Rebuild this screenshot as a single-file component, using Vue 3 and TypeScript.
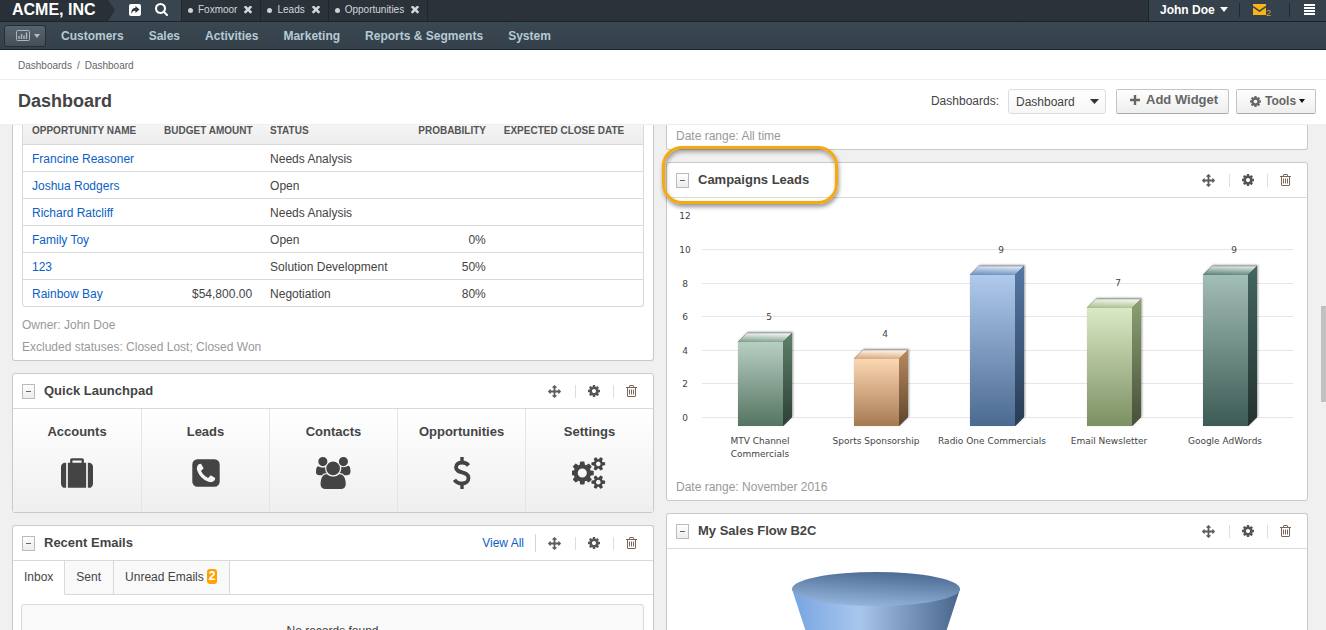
<script setup lang="ts">
import { ref } from 'vue'

interface Icon { box: string; d: string }

const icons: Record<string, Icon> = {
  cog: {
    box: '128 128 1536 1536',
    d: 'M1152 896q0-106-75-181t-181-75-181 75-75 181 75 181 181 75 181-75 75-181zm512-109v222q0 12-8 23t-20 13l-185 28q-19 54-39 91 35 50 107 138 10 12 10 25t-9 23q-27 37-99 108t-94 71q-12 0-26-9l-138-108q-44 23-91 38-16 136-29 186-7 28-36 28h-222q-14 0-24.500-8.500t-11.500-21.500l-28-184q-49-16-90-37l-141 107q-10 9-25 9-14 0-25-11-126-114-165-168-7-10-7-23 0-12 8-23 15-21 51-66.500t54-70.500q-27-50-41-99l-183-27q-13-2-21-12.500t-8-23.500v-222q0-12 8-23t19-13l186-28q14-46 39-92-40-57-107-138-10-12-10-24 0-10 9-23 26-36 98.500-107.500t94.500-71.500q13 0 26 10l138 107q44-23 91-38 16-136 29-186 7-28 36-28h222q14 0 24.500 8.500t11.500 21.500l28 184q49 16 90 37l142-107q9-9 24-9 13 0 25 10 129 119 165 170 7 8 7 22 0 12-8 23-15 21-51 66.500t-54 70.500q26 50 41 98l183 28q13 2 21 12.500t8 23.500z',
  },
  move: {
    box: '0 0 1792 1792',
    d: 'M1792 896q0 26-19 45l-256 256q-19 19-45 19t-45-19-19-45v-128h-384v384h128q26 0 45 19t19 45-19 45l-256 256q-19 19-45 19t-45-19l-256-256q-19-19-19-45t19-45 45-19h128v-384h-384v128q0 26-19 45t-45 19-45-19l-256-256q-19-19-19-45t19-45l256-256q19-19 45-19t45 19 19 45v128h384v-384h-128q-26 0-45-19t-19-45 19-45l256-256q19-19 45-19t45 19l256 256q19 19 19 45t-19 45-45 19h-128v384h384v-128q0-26 19-45t45-19 45 19l256 256q19 19 19 45z',
  },
  trash: {
    box: '192 128 1408 1536',
    d: 'M704 736v576q0 14-9 23t-23 9h-64q-14 0-23-9t-9-23v-576q0-14 9-23t23-9h64q14 0 23 9t9 23zm256 0v576q0 14-9 23t-23 9h-64q-14 0-23-9t-9-23v-576q0-14 9-23t23-9h64q14 0 23 9t9 23zm256 0v576q0 14-9 23t-23 9h-64q-14 0-23-9t-9-23v-576q0-14 9-23t23-9h64q14 0 23 9t9 23zm128 724v-948h-896v948q0 22 7 40.500t14.500 27 10.500 8.500h832q3 0 10.500-8.500t14.500-27 7-40.500zm-672-1076h448l-48-117q-7-9-17-11h-317q-10 2-17 11zm928 32v64q0 14-9 23t-23 9h-96v948q0 83-47 143.500t-113 60.500h-832q-66 0-113-58.500t-47-141.500v-952h-96q-14 0-23-9t-9-23v-64q0-14 9-23t23-9h309l70-167q15-37 54-63t79-26h320q40 0 79 26t54 63l70 167h309q14 0 23 9t9 23z',
  },
  search: {
    box: '64 128 1664 1664',
    d: 'M1216 832q0-185-131.500-316.500t-316.500-131.500-316.500 131.500-131.500 316.500 131.500 316.500 316.500 131.500 316.500-131.500 131.500-316.500zm512 832q0 52-38 90t-90 38q-54 0-90-38l-343-342q-179 124-399 124-143 0-273.500-55.500t-225-150-150-225-55.500-273.500 55.500-273.500 150-225 225-150 273.500-55.500 273.500 55.500 225 150 150 225 55.500 273.500q0 220-124 399l343 343q37 37 37 90z',
  },
  times: {
    box: '302 434 1188 1188',
    d: 'M1490 1322q0 40-28 68l-136 136q-28 28-68 28t-68-28l-294-294-294 294q-28 28-68 28t-68-28l-136-136q-28-28-28-68t28-68l294-294-294-294q-28-28-28-68t28-68l136-136q28-28 68-28t68 28l294 294 294-294q28-28 68-28t68 28l136 136q28 28 28 68t-28 68l-294 294 294 294q28 28 28 68z',
  },
  suitcase: {
    box: '0 -64 1792 1792',
    d: 'M640 256h512v-128h-512v128zm-352 0v1408h-64q-92 0-158-66t-66-158v-960q0-92 66-158t158-66h64zm1120 0v1408h-1024v-1408h128v-160q0-40 28-68t68-28h576q40 0 68 28t28 68v160h128zm384 224v960q0 92-66 158t-158 66h-64v-1408h64q92 0 158 66t66 158z',
  },
  phone: {
    box: '0 0 1792 1792',
    d: 'M1408 1193q0-11-2-16t-18-16.500-40.500-25-47.500-26.500-45.500-25-28.500-15q-5-3-19-13t-25-15-21-5q-15 0-36.500 20.500t-39.500 45-38.500 45-33.500 20.500q-7 0-16.500-3.500t-15.500-6.500-17-9.500-14-8.500q-99-55-170-126.500t-127-170.500q-2-3-8.500-14t-9.500-17-6.500-15.500-3.500-16.500q0-13 20.500-33.500t45-38.500 45-39.500 20.500-36.500q0-10-5-21t-15-25-13-19q-3-6-15-28.500t-25-45.500-26.500-47.500-25-40.500-16.500-18-16-2q-48 0-101 22-46 21-80 94.500t-34 130.500q0 16 2.500 34t5 30.500 9 33 10 29.500 12.500 33 11 30q60 164 216.500 320.500t320.500 216.500q6 2 30 11t33 12.500 29.500 10 33 9 30.500 5 34 2.500q57 0 130.500-34t94.500-80q22-53 22-101zm256-777v960q0 119-84.500 203.500t-203.500 84.500h-960q-119 0-203.500-84.500t-84.500-203.500v-960q0-119 84.500-203.500t203.500-84.500h960q119 0 203.500 84.500t84.500 203.500z',
  },
  users: {
    box: '0 0 1920 1792',
    d: 'M593 896q-162 5-265 128h-134q-82 0-138-40.500t-56-118.500q0-353 124-353 6 0 43.500 21t97.500 42.500 119 21.500q67 0 133-23-5 37-5 66 0 159 93 283zm1071 637q0 120-73 189.500t-194 69.500h-874q-121 0-194-69.500t-73-189.500q0-53 3.500-103.500t14-109 26.500-108.500 43-97.500 62-81 85.500-53.500 111.500-20q10 0 43 21.500t73 48 107 48 135 21.500 135-21.500 107-48 73-48 43-21.500q61 0 111.500 20t85.500 53.500 62 81 43 97.500 26.500 108.500 14 109 3.500 103.500zm-1024-1277q0 106-75 181t-181 75-181-75-75-181 75-181 181-75 181 75 75 181zm704 384q0 159-112.500 271.500t-271.500 112.500-271.500-112.500-112.500-271.500 112.500-271.500 271.500-112.500 271.500 112.500 112.500 271.500zm576 225q0 78-56 118.500t-138 40.500h-134q-103-123-265-128 93-124 93-283 0-29-5-66 66 23 133 23 59 0 119-21.500t97.500-42.500 43.500-21q124 0 124 353zm-128-609q0 106-75 181t-181 75-181-75-75-181 75-181 181-75 181 75 75 181z',
  },
  cogs: {
    box: '0 0 1920 1792',
    d: 'M832 896q0-106-75-181t-181-75-181 75-75 181 75 181 181 75 181-75 75-181zm768 512q0-52-38-90t-90-38-90 38-38 90q0 53 37.500 90.500t90.500 37.500 90.500-37.500 37.500-90.500zm0-1024q0-52-38-90t-90-38-90 38-38 90q0 53 37.500 90.500t90.500 37.500 90.500-37.500 37.500-90.500zm-384 421v185q0 10-7 19.500t-16 10.500l-155 24q-11 35-32 76 34 48 90 115 7 11 7 20 0 12-7 19-23 30-82.500 89.500t-78.500 59.500q-11 0-21-7l-115-90q-37 19-77 31-11 108-23 155-7 24-30 24h-186q-11 0-20-7.500t-10-17.500l-23-153q-34-10-75-31l-118 89q-7 7-20 7-11 0-21-8-144-133-144-160 0-9 7-19 10-14 41-53t47-61q-23-44-35-82l-152-24q-10-1-17-9.500t-7-19.500v-185q0-10 7-19.500t16-10.500l155-24q11-35 32-76-34-48-90-115-7-11-7-20 0-12 7-20 22-30 82-89t79-59q11 0 21 7l115 90q34-18 77-32 11-108 23-154 7-24 30-24h186q11 0 20 7.500t10 17.500l23 153q34 10 75 31l118-89q8-7 20-7 11 0 21 8 144 133 144 160 0 8-7 19-12 16-42 54t-45 60q23 48 34 82l152 23q10 2 17 10.500t7 19.500zm640 533v140q0 16-149 31-12 27-30 52 51 113 51 138 0 4-4 7-122 71-124 71-8 0-46-47t-52-68q-20 2-30 2t-30-2q-14 21-52 68t-46 47q-2 0-124-71-4-3-4-7 0-25 51-138-18-25-30-52-149-15-149-31v-140q0-16 149-31 13-29 30-52-51-113-51-138 0-4 4-7 4-2 35-20t59-34 30-16q8 0 46 46.500t52 67.500q20-2 30-2t30 2q51-71 92-112l6-2q4 0 124 70 4 3 4 7 0 25-51 138 17 23 30 52 149 15 149 31zm0-1024v140q0 16-149 31-12 27-30 52 51 113 51 138 0 4-4 7-122 71-124 71-8 0-46-47t-52-68q-20 2-30 2t-30-2q-14 21-52 68t-46 47q-2 0-124-71-4-3-4-7 0-25 51-138-18-25-30-52-149-15-149-31v-140q0-16 149-31 13-29 30-52-51-113-51-138 0-4 4-7 4-2 35-20t59-34 30-16q8 0 46 46.500t52 67.500q20-2 30-2t30 2q51-71 92-112l6-2q4 0 124 70 4 3 4 7 0 25-51 138 17 23 30 52 149 15 149 31z',
  },
}

const pinned = ['Foxmoor', 'Leads', 'Opportunities']
const menu = ['Customers', 'Sales', 'Activities', 'Marketing', 'Reports & Segments', 'System']
const tools = [
  { icon: 'move', label: 'Move' },
  { icon: 'cog', label: 'Configure' },
  { icon: 'trash', label: 'Delete' },
]
const dashboard = ref('Dashboard')
const mailTab = ref('Inbox')

const opportunities = [
  { name: 'Francine Reasoner', budget: '', status: 'Needs Analysis', probability: '' },
  { name: 'Joshua Rodgers', budget: '', status: 'Open', probability: '' },
  { name: 'Richard Ratcliff', budget: '', status: 'Needs Analysis', probability: '' },
  { name: 'Family Toy', budget: '', status: 'Open', probability: '0%' },
  { name: '123', budget: '', status: 'Solution Development', probability: '50%' },
  { name: 'Rainbow Bay', budget: '$54,800.00', status: 'Negotiation', probability: '80%' },
]

const launchpad = [
  { label: 'Accounts', icon: 'suitcase' },
  { label: 'Leads', icon: 'phone' },
  { label: 'Contacts', icon: 'users' },
  { label: 'Opportunities', icon: '' },
  { label: 'Settings', icon: 'cogs' },
]

const mailTabs = [
  { label: 'Inbox', count: 0 },
  { label: 'Sent', count: 0 },
  { label: 'Unread Emails', count: 2 },
]

/* Chart geometry, in viewBox units */
const zeroY = 220
const top = (v: number) => Math.round(zeroY - v * 16.8)
const ticks = [0, 2, 4, 6, 8, 10, 12]
const campaigns = [
  { x: 71, value: 5, lines: ['MTV Channel', 'Commercials'], front: ['#b7cfc1', '#557462'], side: ['#5d8069', '#2e4036'], cap: ['#7f9f8c', '#f0f5f2'] },
  { x: 187, value: 4, lines: ['Sports Sponsorship'], front: ['#fbd7b3', '#a67a51'], side: ['#b98a5d', '#5e452e'], cap: ['#d8a878', '#fdf3e9'] },
  { x: 303, value: 9, lines: ['Radio One Commercials'], front: ['#afcaec', '#4b6a91'], side: ['#5578a5', '#293b52'], cap: ['#6a8fc0', '#dde8f5'] },
  { x: 420, value: 7, lines: ['Email Newsletter'], front: ['#dae9c4', '#7c9063'], side: ['#8ca172', '#465038'], cap: ['#a9bf8c', '#f2f7ea'] },
  { x: 536, value: 9, lines: ['Google AdWords'], front: ['#a3bdb7', '#3c5b54'], side: ['#43665e', '#22322f'], cap: ['#5c817a', '#dce7e4'] },
]
</script>

<template>
  <div class="page">
    <header class="topbar">
      <a class="brand" href="#">ACME, INC</a>
      <svg class="chevron" viewBox="0 0 10 21" aria-hidden="true"><path d="M0 0H2L9 10L2 21H0Z" /></svg>
      <div class="quick">
        <button type="button" aria-label="Share">
          <svg width="12" height="12" viewBox="0 0 12 12"><rect width="12" height="12" rx="2" fill="#fff" /><path d="M2.500 10C1.800 6 4 4.100 6.400 4.100V1.900L10.500 5.500L6.400 9V6.700C4.600 6.500 3.200 7.500 2.500 10Z" fill="#2c363f" /></svg>
        </button>
        <button type="button" aria-label="Search">
          <svg width="13" height="13" :viewBox="icons.search.box"><path :d="icons.search.d" fill="#fff" /></svg>
        </button>
      </div>
      <ul class="pins">
        <li v-for="p in pinned" :key="p">
          <i class="dot"></i><a href="#">{{ p }}</a>
          <button type="button" :aria-label="'Close ' + p"><svg width="8" height="8" :viewBox="icons.times.box"><path :d="icons.times.d" /></svg></button>
        </li>
      </ul>
      <div class="account">
        <button type="button" class="user">John Doe <svg width="8" height="5" viewBox="0 0 8 5"><path d="M0 0H8L4 5Z" fill="#fff" /></svg></button>
        <a class="mail" href="#" aria-label="Unread mail">
          <svg width="13" height="11" viewBox="0 0 13 11"><path d="M0 0H13V11H0Z" fill="#fbb316" /><path d="M0 2.500L6.500 7L13 2.500" fill="none" stroke="#35414b" stroke-width="1.500" /></svg><span>2</span>
        </a>
        <button type="button" class="burger" aria-label="Menu"><svg width="11" height="11" viewBox="0 0 11 11"><path d="M0 1H11M0 4H11M0 7H11M0 10H11" stroke="#fff" stroke-width="2" /></svg></button>
      </div>
    </header>

    <nav class="nav">
      <button type="button" class="dash" aria-label="Dashboards">
        <svg width="14" height="11" viewBox="0 0 14 11"><rect x="0.500" y="0.500" width="13" height="10" rx="1" fill="none" stroke="#a9b6be" /><path d="M3 9V6M5.500 9V4M8 9V5.500M10.500 9V2.500" stroke="#a9b6be" stroke-width="1.500" /></svg>
        <svg width="6" height="4" viewBox="0 0 6 4"><path d="M0 0H6L3 4Z" fill="#b4bec5" /></svg>
      </button>
      <a v-for="m in menu" :key="m" href="#">{{ m }}</a>
    </nav>

    <div class="crumbs"><a href="#">Dashboards</a><span>/</span><span>Dashboard</span></div>

    <div class="titlebar">
      <h1>Dashboard</h1>
      <label for="dashboards">Dashboards:</label>
      <div class="picker">
        <select id="dashboards" v-model="dashboard"><option>Dashboard</option></select>
        <svg width="9" height="5" viewBox="0 0 9 5"><path d="M0 0H9L4.500 5Z" fill="#333" /></svg>
      </div>
      <button type="button" class="btn add">
        <svg width="10" height="10" viewBox="0 0 10 10"><path d="M5 0V10M0 5H10" stroke="#666" stroke-width="2.400" /></svg>Add Widget
      </button>
      <button type="button" class="btn more">
        <svg class="gear" width="11" height="11" :viewBox="icons.cog.box"><path :d="icons.cog.d" fill="#666" /></svg>Tools
        <svg width="6" height="4" viewBox="0 0 6 4"><path d="M0 0H6L3 4Z" fill="#111" /></svg>
      </button>
    </div>

    <main class="board">
      <div class="column">
        <section class="widget cut">
          <div class="table-box">
            <table>
              <colgroup><col class="c-name" /><col class="c-budget" /><col class="c-status" /><col class="c-prob" /><col /></colgroup>
              <thead>
                <tr><th>OPPORTUNITY NAME</th><th class="num">BUDGET AMOUNT</th><th>STATUS</th><th class="num">PROBABILITY</th><th>EXPECTED CLOSE DATE</th></tr>
              </thead>
              <tbody>
                <tr v-for="o in opportunities" :key="o.name">
                  <td><a href="#">{{ o.name }}</a></td><td class="num">{{ o.budget }}</td><td>{{ o.status }}</td><td class="num">{{ o.probability }}</td><td></td>
                </tr>
              </tbody>
            </table>
          </div>
          <div class="notes"><p>Owner: John Doe</p><p>Excluded statuses: Closed Lost; Closed Won</p></div>
        </section>

        <section class="widget">
          <header class="head">
            <button type="button" class="fold" aria-label="Collapse"></button>
            <h2>Quick Launchpad</h2>
            <div class="tools">
              <button v-for="t in tools" :key="t.icon" type="button" :class="t.icon" :aria-label="t.label"><svg :viewBox="icons[t.icon].box"><path :d="icons[t.icon].d" /></svg></button>
            </div>
          </header>
          <div class="launch">
            <a v-for="l in launchpad" :key="l.label" href="#">
              <span>{{ l.label }}</span>
              <svg v-if="l.icon" height="32" :class="l.icon" :viewBox="icons[l.icon].box"><path :d="icons[l.icon].d" fill="#444" /></svg>
              <svg v-else height="32" width="18" viewBox="0 0 18 32" fill="none" stroke="#444"><path d="M15.500 8.500C14 6.500 11.500 5.500 9 5.500C5.500 5.500 3 7.300 3 10.300C3 17.500 15.500 13.300 15.500 21C15.500 24.400 12.700 26.500 9 26.500C6 26.500 3.200 25.200 1.500 22.800" stroke-width="3.800" /><path d="M9 0V5M9 27V32" stroke-width="3.400" /></svg>
            </a>
          </div>
        </section>

        <section class="widget last">
          <header class="head">
            <button type="button" class="fold" aria-label="Collapse"></button>
            <h2>Recent Emails</h2>
            <a class="all" href="#">View All</a>
            <div class="tools">
              <button v-for="t in tools" :key="t.icon" type="button" :class="t.icon" :aria-label="t.label"><svg :viewBox="icons[t.icon].box"><path :d="icons[t.icon].d" /></svg></button>
            </div>
          </header>
          <div class="mail-tabs">
            <button v-for="t in mailTabs" :key="t.label" type="button" :class="{ on: t.label === mailTab }" @click="mailTab = t.label">{{ t.label }}<b v-if="t.count">{{ t.count }}</b></button>
          </div>
          <div class="empty">No records found</div>
        </section>
      </div>

      <div class="column">
        <section class="widget cut"><p class="range">Date range: All time</p></section>

        <section class="widget marked">
          <div class="marker" aria-hidden="true"></div>
          <header class="head">
            <button type="button" class="fold" aria-label="Collapse"></button>
            <h2>Campaigns Leads</h2>
            <div class="tools">
              <button v-for="t in tools" :key="t.icon" type="button" :class="t.icon" :aria-label="t.label"><svg :viewBox="icons[t.icon].box"><path :d="icons[t.icon].d" /></svg></button>
            </div>
          </header>
          <svg class="chart" viewBox="0 0 640 274" role="img" aria-label="Leads by campaign">
            <defs>
              <filter id="soft" x="-20%" y="-10%" width="150%" height="120%"><feDropShadow dx="1" dy="-1" stdDeviation="1" flood-color="#000" flood-opacity="0.4" /></filter>
              <template v-for="(c, i) in campaigns" :key="i">
                <linearGradient :id="'front' + i" x1="0" y1="0" x2="0" y2="1"><stop offset="0" :stop-color="c.front[0]" /><stop offset="1" :stop-color="c.front[1]" /></linearGradient>
                <linearGradient :id="'side' + i" x1="0" y1="0" x2="0" y2="1"><stop offset="0" :stop-color="c.side[0]" /><stop offset="1" :stop-color="c.side[1]" /></linearGradient>
                <linearGradient :id="'cap' + i" x1="0.200" y1="1" x2="0.350" y2="0"><stop offset="0" :stop-color="c.cap[0]" /><stop offset="1" :stop-color="c.cap[1]" /></linearGradient>
              </template>
            </defs>
            <g v-for="t in ticks" :key="t">
              <rect v-if="t < 12" x="35" :y="top(t) - 1" width="591" height="1" fill="#e6e6e6" />
              <text x="18" :y="top(t) + 3" text-anchor="middle">{{ t }}</text>
            </g>
            <g v-for="(c, i) in campaigns" :key="c.x">
              <path :d="`M${c.x} 228V${top(c.value) + 8}l9 -9h45V219l-9 9Z`" :fill="c.side[1]" filter="url(#soft)" />
              <path :d="`M${c.x} ${top(c.value) + 8}l9 -9h45l-9 9Z`" :fill="`url(#cap${i})`" />
              <path :d="`M${c.x + 9} ${top(c.value) - 1}h45`" stroke="#777" stroke-opacity="0.500" />
              <path :d="`M${c.x + 45} ${top(c.value) + 8}l9 -9V219l-9 9Z`" :fill="`url(#side${i})`" />
              <rect :x="c.x" :y="top(c.value) + 8" width="45" :height="220 - top(c.value)" :fill="`url(#front${i})`" />
              <text :x="c.x + 31" :y="top(c.value) - 14" text-anchor="middle">{{ c.value }}</text>
              <text v-for="(line, n) in c.lines" :key="line" :x="c.x + 22" :y="246 + n * 13" text-anchor="middle">{{ line }}</text>
            </g>
          </svg>
          <p class="range">Date range: November 2016</p>
        </section>

        <section class="widget last">
          <header class="head">
            <button type="button" class="fold" aria-label="Collapse"></button>
            <h2>My Sales Flow B2C</h2>
            <div class="tools">
              <button v-for="t in tools" :key="t.icon" type="button" :class="t.icon" :aria-label="t.label"><svg :viewBox="icons[t.icon].box"><path :d="icons[t.icon].d" /></svg></button>
            </div>
          </header>
          <svg class="chart" viewBox="0 0 640 120" role="img" aria-label="Sales funnel">
            <defs>
              <linearGradient id="cone"><stop offset="0" stop-color="#76a5e2" /><stop offset="0.400" stop-color="#a9c6ec" /><stop offset="1" stop-color="#47648a" /></linearGradient>
              <linearGradient id="mouth" x1="0.700" y1="0" x2="0.400" y2="1"><stop offset="0" stop-color="#4a6990" /><stop offset="1" stop-color="#94b4dc" /></linearGradient>
            </defs>
            <path d="M125 40H293L267 120H151Z" fill="url(#cone)" />
            <ellipse cx="209" cy="40" rx="84" ry="17" fill="url(#mouth)" />
          </svg>
        </section>
      </div>
      <div class="track" aria-hidden="true"></div>
    </main>
  </div>
</template>

<style>
body { margin: 0; overflow: hidden; }
</style>

<style scoped>
.page { display: flex; flex-direction: column; height: 100vh; overflow: hidden; background: #fff; color: #444; font: 12px/18px "Liberation Sans", Arial, sans-serif; }
.page * { box-sizing: border-box; }
a { color: #0b61c4; text-decoration: none; }
button { margin: 0; padding: 0; border: 0; background: none; font: inherit; color: inherit; cursor: pointer; }
h1, h2, p, ul { margin: 0; padding: 0; }
svg { display: block; flex: none; }

.topbar { display: flex; flex: none; height: 22px; background: #2b323a; border-bottom: 1px solid #1b242c; }
.brand { width: 106px; padding-left: 12px; background: #2a3037; color: #fff; font-size: 16px; font-weight: bold; line-height: 19px; }
.chevron { width: 10px; height: 21px; background: #38444e; fill: #2a3037; }
.quick { display: flex; align-items: center; gap: 14px; width: 65px; padding: 0 0 2px 13px; background: #38444e; }
.pins { display: flex; flex: 1; list-style: none; font-size: 10px; line-height: 20px; }
.pins li { display: flex; align-items: center; padding: 0 8px 1px 6px; border-left: 1px solid #1f272e; }
.pins li:last-child { border-right: 1px solid #1f272e; }
.pins a { margin: 0 7px 0 5px; color: #d3d7da; }
.pins svg { fill: #d3d7da; }
.dot { width: 5px; height: 5px; border-radius: 50%; background: #ccd2d6; }
.account { display: flex; align-items: center; padding-bottom: 2px; background: #35414b; border-left: 1px solid #1b242c; }
.user { display: flex; align-items: center; gap: 5px; width: 91px; padding-left: 11px; border-right: 1px solid #1f2931; color: #fff; font-weight: bold; line-height: 14px; }
.mail { display: flex; align-items: center; width: 50px; height: 14px; padding-left: 13px; border-right: 1px solid #1f2931; font-size: 9px; color: #d79a3a; }
.mail span { line-height: 8px; align-self: flex-end; }
.burger { width: 36px; padding-left: 14px; }

.nav { display: flex; flex: none; align-items: center; gap: 25px; height: 28px; padding-left: 4px; background: linear-gradient(#3a4852, #34404a); border-bottom: 1px solid #1c252d; }
.nav a { color: #b5cad3; font-weight: bold; }
.dash { display: flex; align-items: center; gap: 4px; width: 42px; height: 22px; margin-right: -10px; padding-left: 11px; border: 1px solid #252e36; border-radius: 3px; background: linear-gradient(#58636e, #454f5a); }

.crumbs { display: flex; flex: none; gap: 5px; height: 30px; padding-left: 18px; border-bottom: 1px solid #eee; font-size: 10px; line-height: 31px; color: #666; }
.crumbs a { color: #666; }
.titlebar { display: flex; flex: none; align-items: center; height: 45px; padding: 0 10px 2px 18px; border-bottom: 1px solid #eee; }
h1 { flex: 1; font-size: 18px; line-height: 22px; }
.picker { position: relative; width: 98px; margin: 0 10px 0 9px; }
.picker select { display: block; width: 100%; height: 25px; padding: 1px 7px 0; appearance: none; border: 1px solid #ddd; border-radius: 3px; background: linear-gradient(#fff, #f7f7f7); font: inherit; color: #444; }
.picker svg { position: absolute; right: 7px; top: 10px; pointer-events: none; }
.btn { display: flex; align-items: center; height: 25px; border: 1px solid #c4c4c4; border-bottom-color: #aaa; border-radius: 2px; background: linear-gradient(#fefefe, #eee); font-weight: bold; color: #666; }
.add { gap: 6px; width: 113px; padding: 0 0 2px 13px; font-size: 13px; }
.more { gap: 3px; width: 80px; margin-left: 7px; padding-left: 13px; font-size: 12px; }
.more .gear { margin-right: 1px; }

.board { position: relative; display: grid; flex: 1; grid-template-columns: 1fr 1fr; gap: 12px; min-height: 0; padding: 0 18px 0 12px; overflow: hidden; background: #f0f0f0; }
.column { display: flex; flex-direction: column; gap: 12px; min-width: 0; }
.widget { flex: none; border: 1px solid #c9c9c9; border-radius: 3px; background: #fff; }
.cut { border-top: 0; border-radius: 0 0 3px 3px; }
.last { border-bottom: 0; border-radius: 3px 3px 0 0; }
.track { position: absolute; right: 0; top: 181px; width: 5px; height: 96px; background: #c1c1c1; }

.table-box { margin: 0 9px; border: 1px solid #d9d9d9; border-top: 0; border-radius: 0 0 3px 3px; }
table { width: 100%; border-collapse: separate; border-spacing: 0; table-layout: fixed; }
.c-name { width: 21.300%; }
.c-budget { width: 17.100%; }
.c-status { width: 23.900%; }
.c-prob { width: 13.800%; }
th { height: 20px; padding: 0 9px 7px; border-bottom: 1px solid #d9d9d9; background: linear-gradient(#f5f5f5, #ededed); text-align: left; font-size: 10px; line-height: 12px; color: #555; white-space: nowrap; }
td { height: 27px; padding: 2px 9px 0; border-bottom: 1px solid #d9d9d9; }
tr:last-child td { height: 26px; border-bottom: 0; }
.num { text-align: right; }
.notes { padding: 7px 9px 2px; line-height: 22px; color: #999; }

.head { display: flex; align-items: center; height: 35px; padding: 0 3px 0 9px; border-bottom: 1px solid #d9d9d9; }
h2 { flex: 1; margin-left: 9px; padding-bottom: 1px; font-size: 13px; line-height: 18px; }
.fold { display: flex; align-items: center; justify-content: center; width: 13px; height: 15px; border: 1px solid #bbb; background: linear-gradient(#fff, #ececec); }
.fold::before { content: ""; width: 5px; height: 1px; background: #666; }
.tools { display: flex; align-items: center; }
.tools button { display: flex; justify-content: center; align-items: center; width: 36px; height: 13px; padding-right: 1px; }
.tools svg { width: 11px; height: 12px; fill: #7a6658; }
.tools .move { width: 40px; padding-right: 2px; border-right: 1px solid #ddd; }
.tools .move svg { width: 13px; height: 13px; fill: #5c5c5c; }
.tools .cog { width: 38px; border-right: 1px solid #ddd; }
.tools .cog svg { width: 12px; fill: #555; }
.all { padding-right: 11px; border-right: 1px solid #d5d5d5; }

.launch { display: grid; grid-template-columns: repeat(5, 1fr); height: 103px; background: linear-gradient(#fff, #efefef); }
.launch a { display: flex; flex-direction: column; align-items: center; gap: 16px; padding-top: 14px; border-left: 1px solid #e5e5e5; color: #444; font-size: 13px; font-weight: bold; line-height: 18px; }
.launch a:first-child { border-left: 0; }

.mail-tabs { display: flex; height: 34px; border-bottom: 1px solid #d9d9d9; }
.mail-tabs button { display: flex; align-items: center; height: 34px; padding: 0 12px 2px 11px; border-right: 1px solid #d9d9d9; border-bottom: 1px solid #d9d9d9; background: #f9f9f9; }
.mail-tabs .on { padding-right: 11px; background: #fff; border-bottom-color: #fff; }
.mail-tabs b { margin-left: 3px; padding: 0 2px; border-radius: 3px; background: #ffa200; color: #fff; line-height: 15px; }
.empty { margin: 9px 9px 0 8px; padding: 17px; border: 1px solid #d9d9d9; border-radius: 3px; background: #f9f9f9; text-align: center; }

.range { padding: 0 9px; line-height: 22px; color: #999; }
.cut .range { padding-bottom: 2px; }
.marked { position: relative; }
.marked .range { padding-top: 4px; padding-bottom: 2px; }
.marker { position: absolute; left: -5px; top: -17px; width: 176px; height: 58px; border: 3px solid #f6a80f; border-radius: 20px; box-shadow: 1px 3px 4px rgba(0, 0, 0, 0.4), inset 1px 3px 4px rgba(0, 0, 0, 0.35); pointer-events: none; }
.chart { width: 100%; height: auto; }
.chart text { font: 9px "DejaVu Sans", Verdana, sans-serif; fill: #444; }
</style>
